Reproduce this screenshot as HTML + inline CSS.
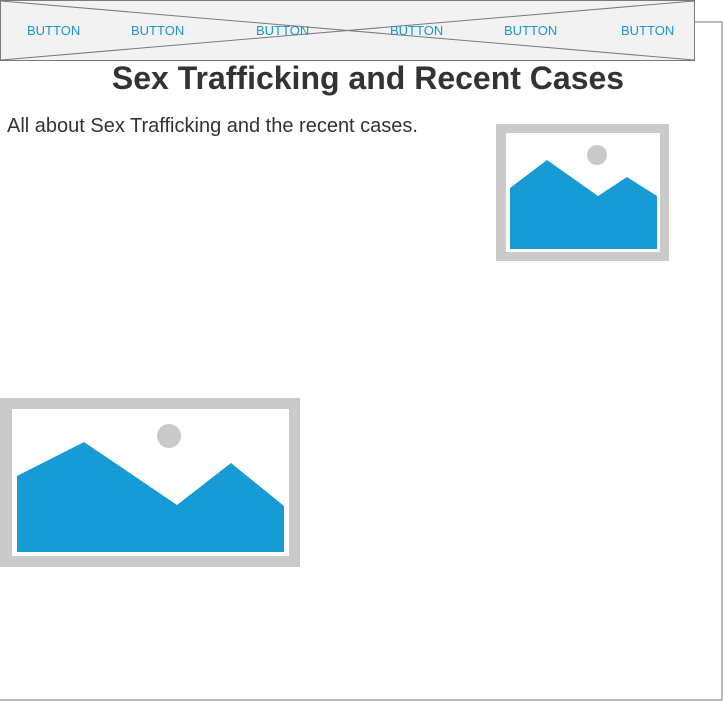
<!DOCTYPE html>
<html><head><style>
body{margin:0;width:723px;height:701px;background:#fff;position:relative;overflow:hidden;font-family:"Liberation Sans",sans-serif}
.nav{position:absolute;left:0;top:0;width:693px;height:59px;background:#f2f2f2;border:1px solid #7a7a7a}
.b{position:absolute;top:23px;font-size:13px;color:#1b95d0}
h1{position:absolute;left:0;width:736px;text-align:center;top:60px;margin:0;font-size:32px;font-weight:bold;color:#333}
p{position:absolute;left:7px;top:115px;margin:0;font-size:20px;color:#333}
</style></head><body>
<svg width="723" height="701" style="position:absolute;left:0;top:0">
<polyline points="694,22 722,22 722,700 0,700" fill="none" stroke="#7a7a7a" stroke-width="1"/>
</svg>
<div class="nav"></div>
<svg width="723" height="701" style="position:absolute;left:0;top:0">
<line x1="1" y1="1" x2="694" y2="60" stroke="#7a7a7a"/>
<line x1="1" y1="60" x2="694" y2="1" stroke="#7a7a7a"/>
<rect x="496" y="124" width="173" height="137" fill="#cacaca"/>
<rect x="506" y="133" width="154" height="119" fill="#fff"/>
<polygon points="510,188 547,160 598,196 627,177 657,196 657,249 510,249" fill="#169bd5"/>
<circle cx="597" cy="155" r="10" fill="#cacaca"/>
<rect x="0" y="398" width="300" height="169" fill="#cacaca"/>
<rect x="12" y="409" width="277" height="147" fill="#fff"/>
<polygon points="17,476 84,442 177,505 231,463 284,506 284,552 17,552" fill="#169bd5"/>
<circle cx="169" cy="436" r="12" fill="#cacaca"/>
</svg>
<span class="b" style="left:27px">BUTTON</span>
<span class="b" style="left:131px">BUTTON</span>
<span class="b" style="left:256px">BUTTON</span>
<span class="b" style="left:390px">BUTTON</span>
<span class="b" style="left:504px">BUTTON</span>
<span class="b" style="left:621px">BUTTON</span>
<h1>Sex Trafficking and Recent Cases</h1>
<p>All about Sex Trafficking and the recent cases.</p>
</body></html>
